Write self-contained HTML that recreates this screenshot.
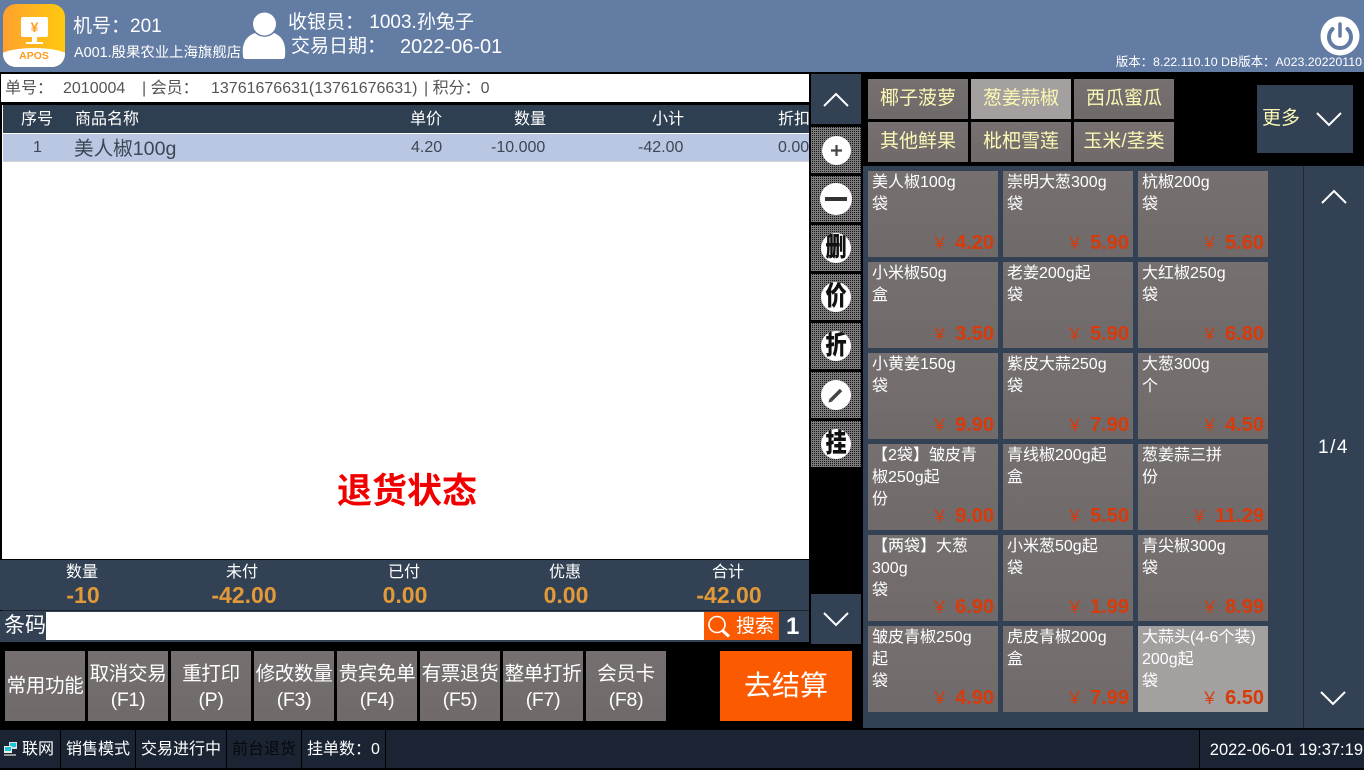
<!DOCTYPE html>
<html lang="zh"><head><meta charset="utf-8"><title>APOS</title>
<style>
html,body{margin:0;padding:0;background:#000}
body{width:1364px;height:768px;position:relative;overflow:hidden;font-family:"Liberation Sans","WenQuanYi Zen Hei","Noto Sans CJK SC",sans-serif;color:#fff}
.a{position:absolute;white-space:nowrap}
.g{position:absolute;background:#736d6d;background-image:linear-gradient(180deg,rgba(255,255,255,.02),rgba(0,0,0,.03))}
.tab{width:100px;height:40px;line-height:40px;text-align:center;color:#fbf8b5;font-size:19px}
.tab.on{background:#a5a0a0}
.ib{position:absolute;left:811px;width:50px;height:46px;background-color:#777;background-image:conic-gradient(#151515 25%,#7b7b7b 0);background-size:2px 2px}
.c{position:absolute;left:10px;top:8px;width:30px;height:30px;border-radius:50%;background:#fff;color:#111;font-weight:900;font-size:26px;line-height:29px;text-align:center;overflow:hidden}
.c span{display:block;transform:scale(.82,1.02)}
.p{width:130px;height:86px;font-size:16px;line-height:22px;color:#fff}
.p span.t{position:absolute;left:4px;top:1px;width:126px;white-space:normal;word-break:break-all}
.p b{position:absolute;right:4px;bottom:1px;color:#d83a0a;font-size:20px;line-height:24px;font-weight:bold;white-space:nowrap}
.p b i{font-style:normal;font-weight:normal;margin-right:7px;font-size:17px}
.fn{width:80px;height:70px;top:651px;text-align:center;font-size:19.5px;line-height:26px;color:#fff;letter-spacing:-.3px}
.fn div{margin-top:10px}
.fn div.s{margin-top:22px}
.th{top:109px;font-size:16px;line-height:22px;color:#fff}
.td{top:137px;font-size:16px;line-height:22px;color:#3c4654}
.sl{top:563px;font-size:16px;line-height:20px;text-align:center;width:100px;color:#fff}
.sv{top:583px;font-size:23px;line-height:25px;text-align:center;width:100px;color:#e29a38;font-weight:bold}
.st{top:730px;height:38px;line-height:40px;font-size:16px;color:#fff;background:#1a2433;border-right:1px solid #000}
</style></head><body>
<div class="a" style="left:0;top:0;width:1364px;height:72px;background:#637ca4"></div>
<!-- logo -->
<div class="a" style="left:3px;top:4px;width:62px;height:63px;border-radius:13px;overflow:hidden;background:linear-gradient(90deg,#ffa12e,#ffc90f)">
<div style="position:absolute;left:-8px;top:44px;width:78px;height:40px;border-radius:50%/12px;background:#fff"></div>
<div style="position:absolute;left:18px;top:13px;width:27px;height:20px;border-radius:2px;background:#fff;color:#ff9d1e;font-size:14px;font-weight:bold;line-height:20px;text-align:center">¥</div>
<div style="position:absolute;left:29px;top:33px;width:5px;height:5px;background:#fff"></div>
<div style="position:absolute;left:23px;top:38px;width:17px;height:2px;background:#fff"></div>
<div style="position:absolute;left:0;top:45px;width:62px;text-align:center;color:#ff9d1e;font-size:10.5px;font-weight:bold;line-height:14px">APOS</div>
</div>
<div class="a" style="left:73px;top:14px;font-size:19px;line-height:26px">机号：201</div>
<div class="a" style="left:74px;top:43px;font-size:14.4px;line-height:20px">A001.殷果农业上海旗舰店</div>
<svg class="a" style="left:242px;top:12px" width="45" height="48" viewBox="0 0 45 48"><ellipse cx="22.5" cy="12" rx="11.5" ry="11.5" fill="#fff"/><path d="M1 44C0 34 2 25 13 21C18 26 27 26 32 21C42 25 44 34 43 44C43 46 42 47 40 47H4C2 47 1 46 1 44Z" fill="#fff"/></svg>
<div class="a" style="left:288px;top:10px;font-size:19px;line-height:26px">收银员： 1003.孙兔子</div>
<div class="a" style="left:291px;top:34px;font-size:19px;line-height:26px">交易日期：</div>
<div class="a" style="left:400px;top:34px;font-size:20px;line-height:26px">2022-06-01</div>
<svg class="a" style="left:1320px;top:16px" width="40" height="40" viewBox="0 0 40 40"><circle cx="20" cy="20" r="19.5" fill="#fff"/><path d="M12.5 13A11 11 0 1 0 27.5 13" fill="none" stroke="#637ca4" stroke-width="4" stroke-linecap="round"/><path d="M20 8V20" stroke="#637ca4" stroke-width="3.5" stroke-linecap="round"/></svg>
<div class="a" style="right:2px;top:54px;font-size:12.4px;line-height:16px">版本：8.22.110.10 DB版本：A023.20220110</div>

<!-- info -->
<div class="a" style="left:1px;top:74px;width:808px;height:28px;background:#fff;color:#555;font-size:16px;line-height:30px"><span style="position:absolute;left:4px">单号：</span><span style="position:absolute;left:62px">2010004</span><span style="position:absolute;left:141px">| 会员：</span><span style="position:absolute;left:210px">13761676631(13761676631)</span><span style="position:absolute;left:423px">| 积分：0</span></div>

<!-- table -->
<div class="a" style="left:2px;top:105px;width:807px;height:454px;background:#fff"></div>
<div class="a" style="left:3px;top:105px;width:806px;height:28px;background:#2f3f52"></div>
<div class="a" style="left:3px;top:134px;width:806px;height:28px;background:#b9c7e2;border-bottom:1px solid #d4d4d4;box-sizing:border-box"></div>
<div class="a th" style="left:21px">序号</div>
<div class="a th" style="left:75px">商品名称</div>
<div class="a th" style="left:410px">单价</div>
<div class="a th" style="left:514px">数量</div>
<div class="a th" style="left:652px">小计</div>
<div class="a th" style="left:778px">折扣</div>
<div class="a td" style="left:33px">1</div>
<div class="a td" style="left:74px;top:138px;font-size:19.6px">美人椒100g</div>
<div class="a td" style="left:411px">4.20</div>
<div class="a td" style="left:491px">-10.000</div>
<div class="a td" style="left:638px">-42.00</div>
<div class="a td" style="left:778px">0.00</div>
<div class="a" style="left:337px;top:470px;font-size:35px;line-height:44px;font-weight:bold;color:#f20000">退货状态</div>

<!-- summary -->
<div class="a" style="left:0;top:560px;width:809px;height:50px;background:#324154"></div>
<div class="a sl" style="left:32px">数量</div><div class="a sv" style="left:33px">-10</div>
<div class="a sl" style="left:192px">未付</div><div class="a sv" style="left:194px">-42.00</div>
<div class="a sl" style="left:354px">已付</div><div class="a sv" style="left:355px">0.00</div>
<div class="a sl" style="left:515px">优惠</div><div class="a sv" style="left:516px">0.00</div>
<div class="a sl" style="left:678px">合计</div><div class="a sv" style="left:679px">-42.00</div>
<div class="a" style="left:2px;top:610px;width:807px;height:1px;background:#1c2430"></div>

<!-- barcode -->
<div class="a" style="left:0;top:611px;width:809px;height:31px;background:#324154"></div>
<div class="a" style="left:4px;top:612px;font-size:21px;line-height:28px">条码</div>
<div class="a" style="left:46px;top:612px;width:658px;height:28px;background:#fff"></div>
<div class="a" style="left:704px;top:612px;width:75px;height:28px;background:#fb5a00"></div>
<svg class="a" style="left:706px;top:614px" width="26" height="25" viewBox="0 0 26 25"><circle cx="11" cy="10.5" r="8" fill="none" stroke="#fff" stroke-width="1.6"/><path d="M16.5 16.5L23 22.5" stroke="#fff" stroke-width="3"/></svg>
<div class="a" style="left:736px;top:613px;font-size:19px;line-height:28px">搜索</div>
<div class="a" style="left:786px;top:612px;font-size:24px;line-height:30px;font-weight:bold">1</div>

<!-- side column -->
<div class="a" style="left:811px;top:74px;width:50px;height:50px;background:#324154"></div>
<svg class="a" style="left:811px;top:74px" width="50" height="50"><path d="M13 32L25 20L37 32" fill="none" stroke="#fff" stroke-width="2"/></svg>
<div class="ib" style="top:127px"><div class="c" style="left:10.500px;top:9px;width:29px;height:29px"><svg width="29" height="29" style="display:block"><path d="M14.500 9V20M9 14.500H20" stroke="#444" stroke-width="2.200"/></svg></div></div>
<div class="ib" style="top:176px"><div class="c" style="left:9px;top:7px;width:32px;height:32px"><svg width="32" height="32" style="display:block"><path d="M5 16H27" stroke="#333" stroke-width="4"/></svg></div></div>
<div class="ib" style="top:225px"><div class="c"><span>删</span></div></div>
<div class="ib" style="top:274px"><div class="c"><span>价</span></div></div>
<div class="ib" style="top:323px"><div class="c"><span>折</span></div></div>
<div class="ib" style="top:372px"><div class="c"><svg width="30" height="30" style="display:block"><path d="M10 20L20 10" stroke="#444" stroke-width="3.500"/><path d="M7.500 22.500L8.500 18.500L11.500 21.500Z" fill="#444"/></svg></div></div>
<div class="ib" style="top:421px"><div class="c"><span>挂</span></div></div>
<div class="a" style="left:811px;top:594px;width:50px;height:50px;background:#324154"></div>
<svg class="a" style="left:811px;top:594px" width="50" height="50"><path d="M13 19L25 31L37 19" fill="none" stroke="#fff" stroke-width="2"/></svg>

<!-- category tabs -->
<div class="g tab" style="left:868px;top:79px">椰子菠萝</div>
<div class="g tab on" style="left:971px;top:79px">葱姜蒜椒</div>
<div class="g tab" style="left:1074px;top:79px">西瓜蜜瓜</div>
<div class="g tab" style="left:868px;top:122px">其他鲜果</div>
<div class="g tab" style="left:971px;top:122px">枇杷雪莲</div>
<div class="g tab" style="left:1074px;top:122px">玉米/茎类</div>
<div class="a" style="left:1257px;top:85px;width:96px;height:68px;background:#324154"></div>
<div class="a" style="left:1262px;top:106px;font-size:19px;line-height:26px;color:#fbf8b5">更多</div>
<svg class="a" style="left:1312px;top:105px" width="32" height="28"><path d="M5 8L17 20L29 8" fill="none" stroke="#fff" stroke-width="2"/></svg>

<!-- product panel -->
<div class="a" style="left:863px;top:166px;width:501px;height:562px;background:#324154"></div>
<div class="a" style="left:1303px;top:166px;width:1px;height:562px;background:#1f2a38"></div>
<svg class="a" style="left:1310px;top:180px" width="46" height="32"><path d="M12 23L24 11L36 23" fill="none" stroke="#fff" stroke-width="2"/></svg>
<svg class="a" style="left:1310px;top:682px" width="46" height="32"><path d="M11 10L23 22L35 10" fill="none" stroke="#fff" stroke-width="2"/></svg>
<div class="a" style="left:1318px;top:436px;font-size:19px;line-height:24px;color:#fff;letter-spacing:1.5px">1/4</div>

<div class="g p" style="left:868px;top:171px"><span class="t">美人椒100g<br>袋</span><b><i>￥</i>4.20</b></div>
<div class="g p" style="left:1003px;top:171px"><span class="t">崇明大葱300g<br>袋</span><b><i>￥</i>5.90</b></div>
<div class="g p" style="left:1138px;top:171px"><span class="t">杭椒200g<br>袋</span><b><i>￥</i>5.60</b></div>
<div class="g p" style="left:868px;top:262px"><span class="t">小米椒50g<br>盒</span><b><i>￥</i>3.50</b></div>
<div class="g p" style="left:1003px;top:262px"><span class="t">老姜200g起<br>袋</span><b><i>￥</i>5.90</b></div>
<div class="g p" style="left:1138px;top:262px"><span class="t">大红椒250g<br>袋</span><b><i>￥</i>6.80</b></div>
<div class="g p" style="left:868px;top:353px"><span class="t">小黄姜150g<br>袋</span><b><i>￥</i>9.90</b></div>
<div class="g p" style="left:1003px;top:353px"><span class="t">紫皮大蒜250g<br>袋</span><b><i>￥</i>7.90</b></div>
<div class="g p" style="left:1138px;top:353px"><span class="t">大葱300g<br>个</span><b><i>￥</i>4.50</b></div>
<div class="g p" style="left:868px;top:444px"><span class="t">【2袋】皱皮青<br>椒250g起<br>份</span><b><i>￥</i>9.00</b></div>
<div class="g p" style="left:1003px;top:444px"><span class="t">青线椒200g起<br>盒</span><b><i>￥</i>5.50</b></div>
<div class="g p" style="left:1138px;top:444px"><span class="t">葱姜蒜三拼<br>份</span><b><i>￥</i>11.29</b></div>
<div class="g p" style="left:868px;top:535px"><span class="t">【两袋】大葱<br>300g<br>袋</span><b><i>￥</i>6.90</b></div>
<div class="g p" style="left:1003px;top:535px"><span class="t">小米葱50g起<br>袋</span><b><i>￥</i>1.99</b></div>
<div class="g p" style="left:1138px;top:535px"><span class="t">青尖椒300g<br>袋</span><b><i>￥</i>8.99</b></div>
<div class="g p" style="left:868px;top:626px"><span class="t">皱皮青椒250g<br>起<br>袋</span><b><i>￥</i>4.90</b></div>
<div class="g p" style="left:1003px;top:626px"><span class="t">虎皮青椒200g<br>盒</span><b><i>￥</i>7.99</b></div>
<div class="g p" style="left:1138px;top:626px;background:#a5a0a0"><span class="t">大蒜头(4-6个装)<br>200g起<br>袋</span><b><i>￥</i>6.50</b></div>

<!-- function buttons -->
<div class="g fn" style="left:5px"><div class="s">常用功能</div></div>
<div class="g fn" style="left:88px"><div>取消交易<br>(F1)</div></div>
<div class="g fn" style="left:171px"><div>重打印<br>(P)</div></div>
<div class="g fn" style="left:254px"><div>修改数量<br>(F3)</div></div>
<div class="g fn" style="left:337px"><div>贵宾免单<br>(F4)</div></div>
<div class="g fn" style="left:420px"><div>有票退货<br>(F5)</div></div>
<div class="g fn" style="left:503px"><div>整单打折<br>(F7)</div></div>
<div class="g fn" style="left:586px"><div>会员卡<br>(F8)</div></div>
<div class="a" style="left:720px;top:651px;width:132px;height:70px;background:#fb5a00;text-align:center;font-size:28px;line-height:70px">去结算</div>

<!-- status -->
<div class="a" style="left:0;top:730px;width:1364px;height:38px;background:#1a2433"></div>
<div class="a st" style="left:0;width:60px"></div>
<svg class="a" style="left:3px;top:741px" width="16" height="16"><rect x="6" y="1" width="8" height="7" fill="#ddd"/><rect x="7" y="2" width="6" height="4" fill="#18c8d8"/><rect x="1" y="5" width="8" height="7" fill="#eee"/><rect x="2" y="6" width="6" height="4" fill="#18c8d8"/><rect x="1" y="13" width="12" height="2" fill="#999"/></svg>
<div class="a" style="left:22px;top:730px;font-size:16px;line-height:40px">联网</div>
<div class="a st" style="left:61px;width:74px;text-align:center">销售模式</div>
<div class="a st" style="left:136px;width:90px;text-align:center">交易进行中</div>
<div class="a st" style="left:227px;width:74px;text-align:center;color:#07090c">前台退货</div>
<div class="a st" style="left:302px;width:83px;text-align:center">挂单数：0</div>
<div class="a" style="left:1199px;top:730px;width:1px;height:38px;background:#000"></div>
<div class="a" style="right:1px;top:730px;font-size:16.500px;line-height:40px">2022-06-01 19:37:19</div>
</body></html>
